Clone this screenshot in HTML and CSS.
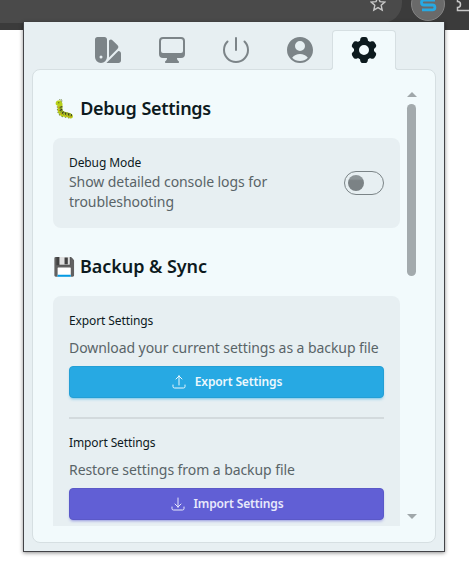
FILE: index.html
```html
<!DOCTYPE html>
<html lang="en">
<head>
<meta charset="utf-8">
<title>Settings</title>
<link rel="stylesheet" href="styles.css">
</head>
<body>
<header class="browser">
  <div class="address">
    <svg class="star" viewBox="0 0 16 16"><path d="M8 1.200l2 4.400 4.800.5-3.600 3.200 1 4.700L8 11.600 3.800 14l1-4.700L1.200 6.100 6 5.600z"/></svg>
  </div>
  <div class="extension">
    <svg viewBox="0 0 32 32"><path d="M23 12H12a2.500 2.500 0 0 0 0 5H20.500a2.400 2.400 0 0 1 0 4.800H10"/></svg>
  </div>
  <svg class="puzzle" viewBox="0 0 14 24"><path d="M14 10.500H1.500V7.500a3 3 0 0 0 0-6V0"/></svg>
</header>

<div class="popup">
  <nav class="tabs">
    <button class="tab" aria-label="Themes"><svg viewBox="0 0 24 24" fill="currentColor" fill-rule="evenodd"><path d="M2.250 4.125c0-1.036.84-1.875 1.875-1.875h5.250c1.036 0 1.875.84 1.875 1.875V17.250a4.500 4.500 0 1 1-9 0V4.125Zm4.500 14.250a1.125 1.125 0 1 0 0-2.250 1.125 1.125 0 0 0 0 2.250Z"/><path d="M10.719 21.750h9.156c1.036 0 1.875-.84 1.875-1.875v-5.250c0-1.036-.84-1.875-1.875-1.875h-.14l-8.742 8.743c-.09.089-.18.175-.274.257ZM12.738 17.625l6.474-6.474a1.875 1.875 0 0 0 0-2.651L15.500 4.787a1.875 1.875 0 0 0-2.651 0l-.1.099V17.250c0 .126-.003.251-.01.375Z"/></svg></button>
    <button class="tab" aria-label="Display"><svg viewBox="0 0 24 24" fill="currentColor" fill-rule="evenodd"><path d="M2.250 5.250a3 3 0 0 1 3-3h13.500a3 3 0 0 1 3 3V15a3 3 0 0 1-3 3h-3v.257c0 .597.237 1.170.659 1.591l.621.622a.75.75 0 0 1-.53 1.280h-9a.75.75 0 0 1-.53-1.280l.621-.622a2.250 2.250 0 0 0 .659-1.590V18h-3a3 3 0 0 1-3-3V5.250Zm1.500 0v7.500a1.500 1.500 0 0 0 1.500 1.500h13.500a1.500 1.500 0 0 0 1.500-1.500v-7.500a1.500 1.500 0 0 0-1.500-1.500H5.250a1.500 1.500 0 0 0-1.500 1.500Z"/></svg></button>
    <button class="tab" aria-label="Power"><svg viewBox="0 0 24 24" fill="none" stroke="currentColor" stroke-width="1.500" stroke-linecap="round"><path d="M5.636 5.636a9 9 0 1 0 12.728 0M12 3v9"/></svg></button>
    <button class="tab" aria-label="Account"><svg viewBox="0 0 24 24" fill="currentColor" fill-rule="evenodd"><path d="M18.685 19.097A9.723 9.723 0 0 0 21.750 12c0-5.385-4.365-9.750-9.750-9.750S2.250 6.615 2.250 12a9.723 9.723 0 0 0 3.065 7.097A9.716 9.716 0 0 0 12 21.750a9.716 9.716 0 0 0 6.685-2.653Zm-12.540-1.285A7.486 7.486 0 0 1 12 15a7.486 7.486 0 0 1 5.855 2.812A8.224 8.224 0 0 1 12 20.250a8.224 8.224 0 0 1-5.855-2.438ZM15.750 9a3.750 3.750 0 1 1-7.500 0 3.750 3.750 0 0 1 7.500 0Z"/></svg></button>
    <button class="tab active" aria-label="Settings"><svg viewBox="0 0 24 24" fill="currentColor" fill-rule="evenodd"><path d="M11.078 2.250c-.917 0-1.699.663-1.850 1.567L9.050 4.889c-.02.12-.115.26-.297.348a7.493 7.493 0 0 0-.986.57c-.166.115-.334.126-.45.083L6.300 5.508a1.875 1.875 0 0 0-2.282.819l-.922 1.597a1.875 1.875 0 0 0 .432 2.385l.84.692c.095.078.17.229.154.43a7.598 7.598 0 0 0 0 1.139c.015.2-.059.352-.153.43l-.841.692a1.875 1.875 0 0 0-.432 2.385l.922 1.597a1.875 1.875 0 0 0 2.282.818l1.019-.382c.115-.043.283-.031.45.082.312.214.641.405.985.57.182.088.277.228.297.35l.178 1.071c.151.904.933 1.567 1.850 1.567h1.844c.916 0 1.699-.663 1.850-1.567l.178-1.072c.02-.12.114-.26.297-.349.344-.165.673-.356.985-.57.167-.114.335-.125.45-.082l1.020.382a1.875 1.875 0 0 0 2.280-.819l.923-1.597a1.875 1.875 0 0 0-.432-2.385l-.84-.692c-.095-.078-.17-.229-.154-.43a7.614 7.614 0 0 0 0-1.139c-.016-.2.059-.352.153-.43l.84-.692c.708-.582.891-1.590.433-2.385l-.922-1.597a1.875 1.875 0 0 0-2.282-.818l-1.020.382c-.114.043-.282.031-.449-.083a7.490 7.490 0 0 0-.985-.57c-.183-.087-.277-.227-.297-.348l-.179-1.072a1.875 1.875 0 0 0-1.850-1.567h-1.843ZM12 15.750a3.750 3.750 0 1 0 0-7.500 3.750 3.750 0 0 0 0 7.500Z"/></svg></button>
  </nav>

  <main class="panel">
    <div class="content">
      <h2 class="tight"><span class="emoji">🐛</span> Debug Settings</h2>
      <section class="card debug">
        <div class="copy">
          <h3>Debug Mode</h3>
          <p>Show detailed console logs for troubleshooting</p>
        </div>
        <span class="toggle" role="switch" aria-checked="false"></span>
      </section>
      <h2 class="second"><span class="emoji">💾</span> Backup &amp; Sync</h2>
      <section class="card backup">
        <h3>Export Settings</h3>
        <p class="spaced">Download your current settings as a backup file</p>
        <button class="btn primary"><svg viewBox="0 0 24 24"><path d="M3 16.500v2.250A2.250 2.250 0 0 0 5.250 21h13.500A2.250 2.250 0 0 0 21 18.750V16.500m-13.500-9L12 3m0 0 4.500 4.500M12 3v13.500"/></svg>Export Settings</button>
        <div class="divider"></div>
        <h3>Import Settings</h3>
        <p class="spaced">Restore settings from a backup file</p>
        <button class="btn secondary"><svg viewBox="0 0 24 24"><path d="M3 16.500v2.250A2.250 2.250 0 0 0 5.250 21h13.500A2.250 2.250 0 0 0 21 18.750V16.500M16.500 12 12 16.500m0 0L7.500 12m4.500 4.500V3"/></svg>Import Settings</button>
      </section>
    </div>
    <div class="scrollbar">
      <svg viewBox="0 0 10 5"><path d="M0 5 5 0l5 5z"/></svg>
      <div class="track"><div class="thumb"></div></div>
      <svg viewBox="0 0 10 5"><path d="M0 0h10L5 5z"/></svg>
    </div>
  </main>
</div>
</body>
</html>
```

FILE: styles.css
```css
* { box-sizing: border-box; }
body {
  margin: 0;
  height: 572px;
  overflow: hidden;
  background: #fff;
  font-family: "Noto Sans", sans-serif;
  color: #0d1a1e;
}
h2, h3, p { margin: 0; }
button { font: inherit; border: 0; padding: 0; }
svg { display: block; flex: none; }

.browser {
  display: flex;
  height: 30px;
  background: #3b3b3b;
  overflow: hidden;
}
.address {
  flex: none;
  width: 402px;
  height: 23px;
  background: #4a4a4a;
  border-bottom-right-radius: 20px;
  display: flex;
  justify-content: flex-end;
  padding-right: 16px;
}
.star { width: 16px; height: 16px; margin-top: -4px; fill: none; stroke: #c7c7c7; stroke-width: 1.4; }
.extension {
  flex: none;
  width: 34px;
  height: 34px;
  margin: -13px 0 0 9px;
  border-radius: 50%;
  background: #6a6a6a;
  border: 1px solid #858585;
}
.extension svg { width: 32px; height: 32px; fill: none; stroke: #27a9e3; stroke-width: 2.8; stroke-linejoin: round; }
.puzzle { width: 14px; height: 24px; margin-left: 11px; fill: none; stroke: #c7c7c7; stroke-width: 1.5; }

.popup {
  position: absolute;
  left: 23px;
  top: 22px;
  width: 422px;
  height: 530px;
  padding: 8px 8px;
  background: #e7eff2;
  border: 1px solid #424347;
  border-top: 0;
  box-shadow: 0 1px 4px rgba(0, 0, 0, .45);
}
.tabs { display: flex; justify-content: center; height: 40px; margin-bottom: -1px; padding-left: 4px; position: relative; }
.tab {
  width: 64px;
  height: 40px;
  padding-top: 4px;
  display: flex;
  justify-content: center;
  background: none;
  color: #7c8488;
}
.tab svg { width: 32px; height: 32px; }
.tab.active {
  position: relative;
  padding-top: 3px;
  background: #f2fafc;
  color: #0d1a1e;
  border: 1px solid #d6dfe2;
  border-bottom: 0;
  border-radius: 4px 4px 0 0;
}
/* Small curved feet that blend the active tab into the panel edge */
.tab.active::before,
.tab.active::after {
  content: "";
  position: absolute;
  bottom: 0;
  width: 3px;
  height: 3px;
}
.tab.active::before { left: -3px; background: radial-gradient(circle at 0 0, transparent 1.5px, #d6dfe2 2px 2.8px, #f2fafc 3.2px); }
.tab.active::after { right: -3px; background: radial-gradient(circle at 100% 0, transparent 1.5px, #d6dfe2 2px 2.8px, #f2fafc 3.2px); }
.panel {
  width: 404px;
  height: 474px;
  background: #f2fafc;
  border: 1px solid #d6dfe2;
  border-radius: 8px;
  padding: 16px 18px 16px 20px;
  display: flex;
  gap: 7px;
}
.content { width: 347px; height: 440px; overflow: hidden; padding-top: 8px; }
h2 { font-size: 18px; line-height: 28px; font-weight: 600; letter-spacing: -.06px; white-space: nowrap; }
h2.tight { letter-spacing: -.3px; word-spacing: .7px; }
.emoji { font-family: "Noto Color Emoji", sans-serif; font-weight: 400; }
.second { margin-top: 24px; }
.card { margin-top: 15px; padding: 16px; border-radius: 8px; background: #e7eff2; }
.debug { display: flex; align-items: center; justify-content: space-between; height: 90px; }
.debug h3 { margin-bottom: 1px; }
.backup { padding-top: 17px; }
.copy { width: 230px; padding-top: 1px; }
h3 { font-size: 12px; line-height: 16px; font-weight: 400; letter-spacing: -.1px; }
p { font-size: 14px; line-height: 20px; letter-spacing: -.07px; color: #596468; }
.spaced { margin-top: 9px; }
.toggle { width: 40px; height: 24px; border: 1px solid #7b8487; border-radius: 12px; padding: 3px; }
.toggle::before { content: ""; display: block; width: 16px; height: 16px; border-radius: 50%; background: linear-gradient(#8d9598 25%, #7b8285 35%); }
.btn {
  display: flex;
  align-items: center;
  justify-content: center;
  gap: 8px;
  width: 100%;
  height: 32px;
  margin-top: 8px;
  padding-bottom: 1px;
  border-radius: 4px;
  font-size: 12px;
  font-weight: 600;
  letter-spacing: -.13px;
}
.btn svg { width: 16px; height: 16px; margin-top: 1px; fill: none; stroke: currentColor; stroke-width: 1.5; stroke-linecap: round; stroke-linejoin: round; }
.btn.primary { background: #27a9e3; color: #edf8fd; border: 1px solid #249fd5; box-shadow: 0 2px 3px -1px rgba(39, 169, 227, .6); }
.btn.secondary { background: #615fd5; color: #e8e9fb; border: 1px solid #5b59c8; box-shadow: 0 2px 3px -1px rgba(97, 95, 213, .6); }
.divider { height: 2px; margin: 19px 0 16px; background: #d3dadd; }
.scrollbar { width: 10px; display: flex; flex-direction: column; padding: 6px 0 7px; }
.scrollbar svg { width: 10px; height: 5px; fill: #a0a7aa; }
.track { flex: 1; padding-top: 7px; }
.thumb { width: 9px; height: 172px; border-radius: 5px; background: #a3aaad; }
```
